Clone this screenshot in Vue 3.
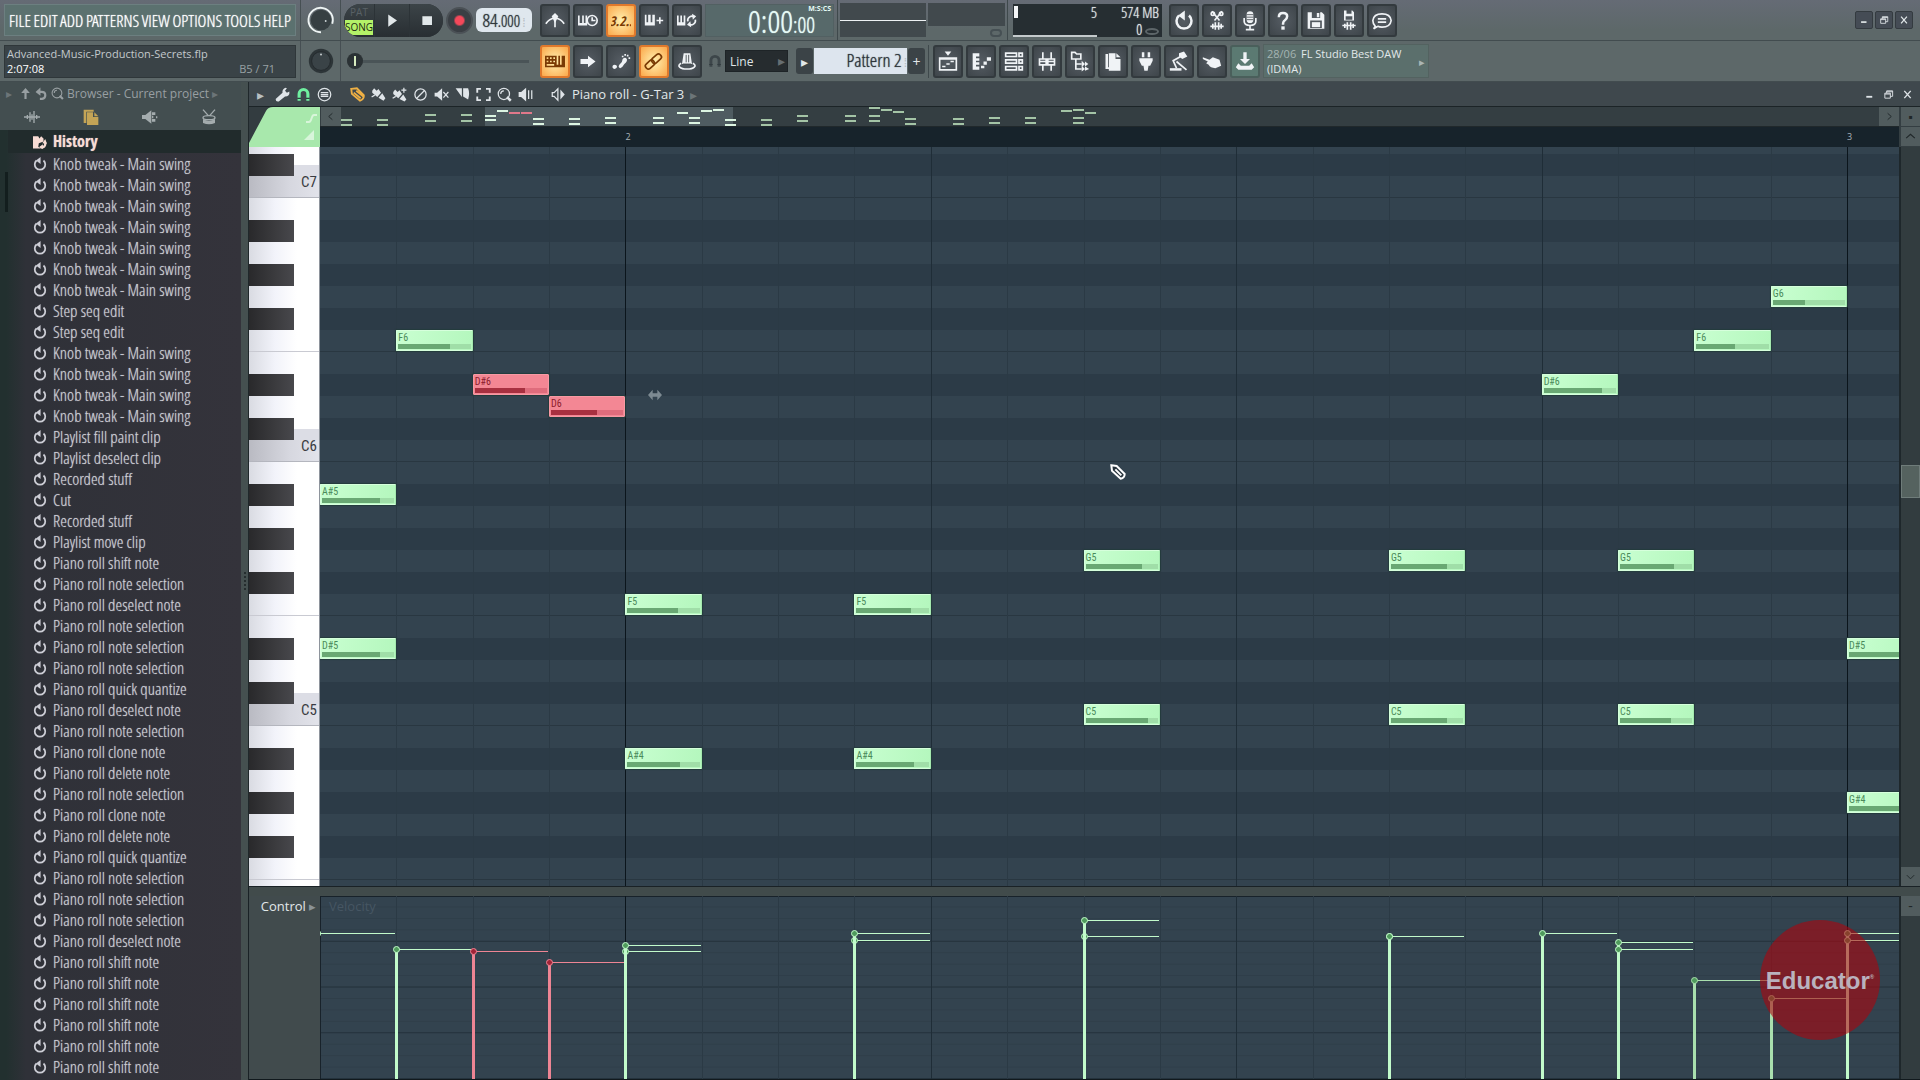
<template>
  <div class="app">
    <header class="toolbar">
      <div class="bar">
        <nav class="menu" aria-label="Main menu">
          <button v-for="m in menus" :key="m" type="button">{{ m }}</button>
        </nav>
        <div class="knob-cell">
          <svg class="knob" viewBox="0 0 32 32" role="img" aria-label="Main volume">
            <circle cx="16" cy="16" r="11" fill="#363f42" />
            <path d="M16 29A13 13 0 1 1 28 20" fill="none" stroke="#eef4f4" stroke-width="2" />
            <circle cx="21" cy="17" r="1" fill="#cfd6d8" />
          </svg>
        </div>
        <div class="transport">
          <div class="pill">
            <button class="mode" type="button">
              <span class="pat">PAT</span>
              <span class="song">SONG</span>
            </button>
            <button type="button" aria-label="Play" v-html="icon('play')"></button>
            <button type="button" aria-label="Stop" v-html="icon('stop')"></button>
          </div>
          <button class="record" type="button" aria-label="Record"></button>
          <button class="tempo" type="button">84<small>.000</small><span class="spin">⁞</span></button>
        </div>
        <div class="buttons">
          <button
            v-for="b in topButtons"
            :key="b.name"
            :class="['tool', { lit: b.lit }]"
            type="button"
            :aria-label="b.name"
            v-html="icon(b.name)"
          ></button>
        </div>
        <div class="clock">
          <span class="clock-main">0:00</span>
          <span class="clock-sub">:00</span>
          <span class="clock-unit">M:S:CS</span>
        </div>
        <div class="scopes">
          <div class="scope"><i></i></div>
          <div class="peak-cell">
            <div class="peak"></div>
            <span class="peak-dot"></span>
          </div>
        </div>
        <div class="monitor">
          <div class="cpu"><i></i><span>5</span></div>
          <div class="mem"><span>574 MB</span><span>0 <em></em></span></div>
        </div>
        <div class="buttons">
          <button
            v-for="n in fileButtons"
            :key="n"
            class="tool"
            type="button"
            :aria-label="n"
            v-html="icon(n)"
          ></button>
        </div>
        <div class="window-buttons">
          <button type="button" aria-label="Minimize" v-html="icon('min')"></button>
          <button type="button" aria-label="Restore" v-html="icon('restore')"></button>
          <button type="button" aria-label="Close" v-html="icon('close')"></button>
        </div>
      </div>

      <div class="bar">
        <div class="hint">
          <div>Advanced-Music-Production-Secrets.flp</div>
          <div class="hint-row"><b>2:07:08</b><span>B5 / 71</span></div>
        </div>
        <div class="knob-cell">
          <svg class="knob" viewBox="0 0 32 32" role="img" aria-label="Main pitch">
            <circle cx="16" cy="16" r="13" fill="#2d3538" />
            <circle cx="16" cy="16" r="10" fill="#3a4347" stroke="#232a2d" stroke-width="1" />
            <circle cx="16" cy="9" r="1" fill="#cfd6d8" />
          </svg>
        </div>
        <div class="transport">
          <input class="pitch" type="range" min="0" max="100" value="0" aria-label="Song position" />
        </div>
        <div class="buttons">
          <button
            v-for="b in editButtons"
            :key="b.name"
            :class="['tool', { lit: b.lit }]"
            type="button"
            :aria-label="b.name"
            v-html="icon(b.name)"
          ></button>
        </div>
        <div class="snap">
          <span class="snap-icon" v-html="icon('magnet')"></span>
          <span class="select-wrap">
            <select aria-label="Snap">
              <option>Line</option>
            </select>
          </span>
        </div>
        <div class="pattern">
          <button class="side" type="button" aria-label="Pattern menu">▸</button>
          <button class="pattern-name" type="button">Pattern 2<span class="spin">⁞</span></button>
          <button class="side" type="button" aria-label="Add pattern">+</button>
        </div>
        <div class="buttons views">
          <button
            v-for="n in viewButtons"
            :key="n"
            :class="['tool', { flat: n === 'download' }]"
            type="button"
            :aria-label="n"
            v-html="icon(n)"
          ></button>
        </div>
        <button class="news" type="button">
          <span><i>28/06</i> FL Studio Best DAW<br />(IDMA)</span>
          <span class="arrow">▸</span>
        </button>
      </div>
    </header>

    <main class="workspace">
      <aside class="browser">
        <div class="browser-head">
          <div class="browser-title">
            <span class="tri dim">▸</span>
            <span v-html="icon('up')"></span>
            <span v-html="icon('back')"></span>
            <span v-html="icon('zoom')"></span>
            Browser - Current project
            <span class="tri dim">▸</span>
          </div>
          <div class="browser-tabs">
            <button type="button" aria-label="All" v-html="icon('wave')"></button>
            <button class="current" type="button" aria-label="Current project" v-html="icon('docs')"></button>
            <button type="button" aria-label="Plugins" v-html="icon('plug')"></button>
            <button type="button" aria-label="Library" v-html="icon('drum')"></button>
          </div>
        </div>
        <div class="browser-body">
          <div class="browser-track"><i></i></div>
          <div class="browser-list">
            <button class="history" type="button">
              <span v-html="icon('history')"></span>History
            </button>
            <ul>
              <li v-for="(h, i) in history" :key="i">
                <button type="button"><span v-html="icon('undo')"></span>{{ h }}</button>
              </li>
            </ul>
          </div>
        </div>
      </aside>
      <div class="splitter"><i></i></div>

      <section class="roll">
        <div class="roll-title">
          <span class="tri">▸</span>
          <button
            v-for="t in rollTools"
            :key="t"
            :class="t"
            type="button"
            :aria-label="t"
            v-html="icon(t)"
          ></button>
          <span class="speaker" v-html="icon('speaker')"></span>
          <h1>Piano roll - G-Tar 3</h1>
          <span class="tri dim">▸</span>
          <div class="roll-window">
            <button type="button" aria-label="Minimize roll" v-html="icon('min')"></button>
            <button type="button" aria-label="Restore roll" v-html="icon('restore')"></button>
            <button type="button" aria-label="Close roll" v-html="icon('close')"></button>
          </div>
        </div>

        <div class="roll-top">
          <svg class="corner" viewBox="0 0 71 40" preserveAspectRatio="none" aria-hidden="true">
            <path d="M0 40V36L17 4Q19 0 24 0H71V40Z" fill="#a8e8ac" />
            <path d="M57 15h3c3 0 2-7 5-7h3" fill="none" stroke="#d8f5da" stroke-width="2" />
            <path d="M55 33h10V23Z" fill="#d8f5da" />
          </svg>
          <div class="roll-heads">
            <div class="overview">
              <button type="button" aria-label="Scroll left" v-html="icon('left')"></button>
              <svg class="mini" aria-hidden="true">
                <rect x="144" y="0" width="248" height="20" fill="#4f5c61" />
                <rect
                  v-for="(m, i) in miniNotes"
                  :key="i"
                  :x="144 + m[0] * 12"
                  :y="m[1]"
                  width="11"
                  height="2"
                  :fill="m[2] ? '#e0788a' : m[0] >= 0 && m[0] < 21 ? '#dcf5e2' : '#a4c4a6'"
                />
              </svg>
              <button type="button" aria-label="Scroll right" v-html="icon('right')"></button>
            </div>
            <div class="timeline">
              <span v-for="b in bars" :key="b.label" :style="{ left: pct(b.step) }">{{ b.label }}</span>
            </div>
          </div>
          <div class="scroll-head">
            <button type="button" aria-label="View menu">▪</button>
            <button type="button" aria-label="Scroll up" v-html="icon('chevup')"></button>
          </div>
        </div>

        <div class="roll-body">
          <div class="keys">
            <div class="rows">
              <div v-for="k in keys" :key="k.pitch" :class="['key', k.kind]">
                <span v-if="k.kind === 'c'">C{{ k.octave }}</span>
              </div>
            </div>
          </div>
          <div class="grid">
            <div class="rows">
              <div v-for="k in keys" :key="k.pitch" :class="['lane', k.kind]"></div>
            </div>
            <i v-for="l in lines" :key="l.step" :class="['line', l.kind]" :style="{ left: pct(l.step) }"></i>
            <div
              v-for="(n, i) in notes"
              :key="i"
              :class="['note', { selected: n.selected }]"
              :style="{ left: pct(n.step), top: noteTop(n) + 'px', width: pct(1) }"
            >
              <span>{{ n.name }}</span>
              <b><i :style="{ width: n.vel * 100 + '%' }"></i></b>
            </div>
            <span class="resize-cursor" v-html="icon('resize')"></span>
            <span class="pen-cursor" v-html="icon('pen')"></span>
          </div>
          <div class="vscroll">
            <i></i>
            <button type="button" aria-label="Scroll down" v-html="icon('chevdown')"></button>
          </div>
        </div>

        <div class="control">
          <button class="control-label" type="button">Control <span>▸</span></button>
          <div class="velocity">
            <span class="velocity-name">Velocity</span>
            <i v-for="l in lines" :key="l.step" :class="['line', l.kind]" :style="{ left: pct(l.step) }"></i>
            <div
              v-for="(n, i) in notes"
              :key="i"
              :class="['stem', { selected: n.selected, soft: n.vel < 0.6, first: n.step === 0 }]"
              :style="{ left: pct(n.step), height: n.vel * 100 + '%', width: pct(1) }"
            ></div>
          </div>
          <div class="vscroll">
            <button type="button" aria-label="Control menu">-</button>
          </div>
          <div class="badge">Educator<sup>®</sup></div>
        </div>
      </section>
    </main>
  </div>
</template>

<script setup>
const STEPS = 20.68
const TOP_PITCH = 86
const ROW = 22

const menus = ['FILE', 'EDIT', 'ADD', 'PATTERNS', 'VIEW', 'OPTIONS', 'TOOLS', 'HELP']

const topButtons = [
  { name: 'metronome' },
  { name: 'waitkeys' },
  { name: 'countdown', lit: true },
  { name: 'overdub' },
  { name: 'looprec' }
]
const editButtons = [
  { name: 'typing', lit: true },
  { name: 'arrow' },
  { name: 'step' },
  { name: 'link', lit: true },
  { name: 'hat' }
]
const fileButtons = ['undo', 'cut', 'mic', 'help', 'save', 'render', 'chat']
const viewButtons = ['playlist', 'pianoroll', 'rack', 'mixer', 'tree', 'copy', 'plugin', 'lamp', 'touch', 'download']
const rollTools = [
  'wrench', 'magnet', 'stamp', 'pencil', 'brush', 'brushplus', 'erase', 'mute', 'slice', 'select', 'zoom', 'playback'
]

const shift = 'Piano roll shift note'
const selection = 'Piano roll note selection'
const deselect = 'Piano roll deselect note'
const clone = 'Piano roll clone note'
const del = 'Piano roll delete note'
const quantize = 'Piano roll quick quantize'
const history = [
  ...Array(7).fill('Knob tweak - Main swing'),
  'Step seq edit',
  'Step seq edit',
  ...Array(4).fill('Knob tweak - Main swing'),
  'Playlist fill paint clip',
  'Playlist deselect clip',
  'Recorded stuff',
  'Cut',
  'Recorded stuff',
  'Playlist move clip',
  shift, selection, deselect, selection, selection, selection, quantize, deselect,
  selection, clone, del, selection, clone, del, quantize,
  selection, selection, selection, deselect,
  ...Array(6).fill(shift)
]

const names = ['C', 'C#', 'D', 'D#', 'E', 'F', 'F#', 'G', 'G#', 'A', 'A#', 'B']

const keys = Array.from({ length: 35 }, (_, i) => {
  const pitch = TOP_PITCH - i
  const name = names[pitch % 12]
  let kind = 'white'
  if (name.length > 1) kind = name === 'C#' ? 'black above-c' : 'black'
  if (name === 'C') kind = 'c'
  if (name === 'F') kind = 'f'
  return { pitch, kind, octave: Math.floor(pitch / 12) }
})

const bars = [
  { label: '2', step: 4 },
  { label: '3', step: 20 }
]

const lines = Array.from({ length: 20 }, (_, i) => {
  const step = i + 1
  let kind = ''
  if (step % 4 === 0) kind = 'beat'
  if (step === 4 || step === 20) kind = 'bar-line'
  return { step, kind }
})

const notes = [
  { step: 0, name: 'A#5', vel: 0.8 },
  { step: 0, name: 'D#5', vel: 0.8 },
  { step: 1, name: 'F6', vel: 0.71 },
  { step: 2, name: 'D#6', vel: 0.7, selected: true },
  { step: 3, name: 'D6', vel: 0.64, selected: true },
  { step: 4, name: 'F5', vel: 0.7 },
  { step: 4, name: 'A#4', vel: 0.73 },
  { step: 7, name: 'F5', vel: 0.76 },
  { step: 7, name: 'A#4', vel: 0.8 },
  { step: 10, name: 'G5', vel: 0.78 },
  { step: 10, name: 'C5', vel: 0.87 },
  { step: 14, name: 'G5', vel: 0.78 },
  { step: 14, name: 'C5', vel: 0.78 },
  { step: 16, name: 'D#6', vel: 0.8 },
  { step: 17, name: 'G5', vel: 0.75 },
  { step: 17, name: 'C5', vel: 0.71 },
  { step: 18, name: 'F6', vel: 0.54 },
  { step: 19, name: 'G6', vel: 0.44 },
  { step: 20, name: 'D#5', vel: 0.8 },
  { step: 20, name: 'G#4', vel: 0.76 }
]

// [step, y, selected]
const miniNotes = [
  [-12, 12], [-12, 17], [-9, 12], [-9, 17], [-5, 7], [-5, 13], [-2, 7], [-2, 13],
  [0, 8], [0, 12], [1, 3], [2, 5, true], [3, 5, true],
  [4, 11], [4, 16], [7, 11], [7, 16], [10, 10], [10, 15], [14, 10], [14, 15],
  [16, 5], [17, 10], [17, 15], [18, 3], [19, 2], [20, 12], [20, 17],
  [23, 12], [23, 17], [26, 8], [26, 13], [30, 8], [30, 13],
  [32, 0], [32, 8], [32, 13], [33, 2], [34, 4], [35, 11], [35, 16],
  [39, 11], [39, 16], [42, 10], [42, 15], [45, 10], [45, 15],
  [48, 3], [49, 2], [49, 10], [49, 15], [50, 5]
]

function pct(step) {
  return (step / STEPS) * 100 + '%'
}

function noteTop(note) {
  const octave = Number(note.name.slice(-1))
  const pitch = octave * 12 + names.indexOf(note.name.slice(0, -1))
  return (TOP_PITCH - pitch) * ROW - 15
}

const s = 'fill="none" stroke="currentColor" stroke-width="2"'
const f = 'fill="currentColor"'

const icons = {
  play: `<path ${f} d="M8 5l10 7-10 7z"/>`,
  stop: `<path ${f} d="M7 7h11v10H7z"/>`,
  min: `<path ${f} d="M5 15h13v4H5z"/>`,
  restore: `<path ${s} d="M4 9h12v11H4zM4 11h12M8 9V4h13v12h-5M8 6h13"/>`,
  close: `<path fill="none" stroke="currentColor" stroke-width="3" d="M5 4l14 16M19 4L5 20"/>`,
  metronome: `<path ${s} d="M1 16q4-6 10-7M23 16q-4-6-10-7M12 6v14"/><path ${f} d="M8 7l4-4 4 4-4 8z"/>`,
  waitkeys: `<path ${f} d="M0 6h2v9h3V6h2v9h2V6h2v12H0z"/><circle ${s} cx="17" cy="12" r="6"/><path ${s} d="M17 8v4h4"/>`,
  countdown: `<text x="12" y="18" text-anchor="middle" font-size="16" font-style="italic" font-family="Open Sans Condensed, sans-serif" font-weight="700" fill="currentColor">3.2.:</text>`,
  overdub: `<path ${f} d="M1 5h2v9h2V5h3v9h2V5h3v13H1z"/><path ${s} d="M15 12h8M19 8v8"/>`,
  looprec: `<path ${f} d="M0 6h2v8h2V6h2v8h2V6h2v12H0z"/><path ${s} d="M13 13a5 5 0 0 1 8-5M22 11a5 5 0 0 1-8 5"/><path ${f} d="M18 4l5 3-4 4zM17 20l-5-3 4-4z"/>`,
  typing: `<path ${f} fill-rule="evenodd" d="M0 5h24v14H0zM2 7v2h2V7zm4 0v2h2V7zm4 0v2h2V7zM2 11v2h2v-2zm4 0v2h2v-2zm4 0v2h2v-2zM2 15v2h9v-2zM14 5v11h2V5zm4 0v11h2V5z"/>`,
  arrow: `<path ${f} d="M3 9h9V5l9 7-9 7v-4H3z"/>`,
  step: `<path ${f} d="M2 17q2-2 5 0 1 3-3 4-3-1-2-4zM11 20q-3-1-1-4 4-3 4-7 3-3 5 0 1 3-3 6-2 4-5 5zM13 5h2v2h-2zM16 3h2v2h-2zM19 4h2v2h-2zM21 7h2v2h-2z"/>`,
  link: `<g ${s} transform="rotate(-42 12 12)"><rect x="0" y="8" width="12" height="7" rx="3"/><rect x="10" y="8" width="13" height="7" rx="3"/></g>`,
  hat: `<path ${f} d="M8 2h8l2 13H6z"/><path ${s} d="M5 14c-6 3-1 7 7 7s13-4 7-7"/><path stroke="#3a4145" d="M11 4v9M14 4v9M7 15h10"/>`,
  undo: `<path fill="none" stroke="currentColor" stroke-width="3" d="M6 6a9 9 0 1 0 12 0"/><path ${f} d="M13 0v12L5 6z"/>`,
  cut: `<path ${s} d="M6 1l9 11M18 1L9 12"/><circle ${s} cx="7" cy="4" r="2"/><circle ${s} cx="17" cy="4" r="2"/><path ${s} d="M4 19h16M7 16v6M10 14v9M14 14v9M17 16v6"/>`,
  mic: `<rect ${f} x="8" y="1" width="8" height="14" rx="4"/><path ${s} d="M5 9v4q0 5 7 5t7-5V9M12 18v4M7 23h10"/><path stroke="#444b50" d="M8 5h8M8 8h8M8 11h8"/>`,
  help: `<path fill="none" stroke="currentColor" stroke-width="3" d="M7 8q0-5 5-5t5 4q0 3-3 5-2 1-2 5"/><path ${f} d="M10 19h4v4h-4z"/>`,
  save: `<path ${f} fill-rule="evenodd" d="M2 2h17l3 3v17H2zM7 2v7h10V2zm6 1h3v5h-3zM5 12v9h14v-9z"/><path ${f} d="M7 14h10v6H7z"/>`,
  render: `<path ${f} fill-rule="evenodd" d="M6 0h10l2 2v10H6zM9 0v4h6V0zM8 7v4h8V7z"/><path ${s} d="M4 18h16M7 16v5M10 14v9M14 14v9M17 16v5"/>`,
  chat: `<path ${s} d="M4 19q-3-3-3-7 1-8 11-8t11 8q-1 8-11 8-3 0-5-1l-5 3zM7 10h10M7 14h10"/>`,
  playlist: `<path ${s} d="M2 8h20v14H2zM2 9h20"/><path ${s} d="M5 18h4M10 15h4M15 12h4"/><path ${f} d="M8 0h8l-4 5z"/>`,
  pianoroll: `<path ${f} d="M2 2h8v4H6v2h4v3H6v2h4v3H6v2h4v4H2zM12 17h4v3h-4zM15 12h4v4h-4zM19 7h5v4h-5z"/>`,
  rack: `<path ${s} d="M2 2h13v4H2zM18 2h4v4h-4zM2 10h13v4H2zM18 10h4v4h-4zM2 18h13v4H2zM18 18h4v4h-4z"/>`,
  mixer: `<path ${s} d="M7 1v8M7 16v7M17 1v8M17 16v7M3 9h8v7H3zM13 9h8v7h-8zM3 12h8M13 12h8"/>`,
  tree: `<path ${s} d="M2 1h4l2 2h5v6H2zM7 10v11h7M7 15h7"/><path ${f} d="M14 11l4 4-4 4zM18 12l4 3-4 3zM14 17l4 4-4 3zM18 18l5 3-5 2z"/>`,
  copy: `<path ${f} d="M3 3h3v16h11v2H3z"/><path ${f} d="M7 2h8v7h6v14H7zM16 2l5 5h-5z"/>`,
  plugin: `<path ${f} d="M7 1h3v6H7zM14 1h3v6h-3zM4 8h16v3l-3 6h-2l-1 6h-4l-1-6H7l-3-6z"/>`,
  lamp: `<path ${f} d="M12 2l6-2 4 6-6 3-4-3z"/><path ${s} d="M14 6L5 11l4 9M9 12l12 10"/><path ${f} d="M1 20h14v3H1z"/>`,
  touch: `<path ${f} d="M1 7l8 3 4-3 8 3 2 7-7 3q-6 0-8-4l-3-2 2-2-6-3z"/>`,
  download: `<path ${f} d="M10 1h4v8h4l-6 6-6-6h4zM4 14l3 3h10l3-3 3 5-3 3H4l-3-3z"/>`,
  magnet: `<path fill="none" stroke="currentColor" stroke-width="5" d="M5 22V11a7 7 0 0 1 14 0v11"/><path stroke="#333c40" stroke-width="2" d="M2 18h6M16 18h6"/>`,
  up: `<path ${f} d="M12 2l8 9h-6v11h-4V11H4z"/>`,
  back: `<path fill="none" stroke="currentColor" stroke-width="4" d="M9 22h4q6-1 6-7t-7-6H6"/><path ${f} d="M10 1v15L1 9z"/>`,
  zoom: `<circle ${s} cx="11" cy="11" r="9"/><path fill="none" stroke="currentColor" stroke-width="4" d="M16 16l6 6"/><path ${s} d="M6 11q0-5 5-5"/>`,
  wave: `<path ${s} d="M0 12h24M5 9v6M9 5v14M12 8v8M15 3v18M19 9v6"/>`,
  docs: `<path ${f} d="M1 1h15v3H5v17H1z"/><path ${f} d="M6 5h9v7h8v12H6zM17 5l6 6h-6z"/>`,
  plug: `<path ${f} d="M0 9h5l9-7v20l-9-7H0zM15 5h5v4h-5zM15 15h5v4h-5zM15 10h2v4h-2zM21 11h2v3h-2z"/>`,
  drum: `<path ${s} d="M3 1l8 9M21 1l-8 9"/><ellipse ${s} cx="12" cy="13" rx="9" ry="3"/><path ${f} d="M3 15q9 5 18 0v6q-9 4-18 0z"/>`,
  history: `<path ${f} d="M0 2h9l2 4 3-4 4 4v5l-8 3-1 6 4 3H0z"/><path fill="none" stroke="currentColor" stroke-width="4" d="M13 21q9 1 8-8"/><path ${f} d="M16 14l5-7 3 8zM17 16v8l-7-3z"/>`,
  wrench: `<path ${f} d="M1 19L12 9q-1-6 5-8l2 1-3 4 3 3 4-2q1 8-7 8L6 23q-5 1-5-4z"/>`,
  stamp: `<circle ${s} cx="12" cy="12" r="10"/><path ${s} d="M6 9h12M6 12h12M6 15h12"/>`,
  pencil: `<path fill="none" stroke="currentColor" stroke-width="3" d="M2 3l9-1 11 11q1 6-6 9L3 11zM6 9l11 9M10 6l11 9"/>`,
  brush: `<path ${f} d="M2 6l3-4 4 4 3-3 4 6-6 7-8-7zM12 17l6-7 5 8-3 4z"/><path ${s} d="M1 16l5-3"/>`,
  brushplus: `<path ${f} d="M2 8l3-4 4 4 3-3 4 6-6 7-8-7zM12 19l6-7 5 8-3 3z"/><path ${s} d="M19 1v8M15 5h8M1 18l5-3"/>`,
  erase: `<circle ${s} cx="12" cy="12" r="9"/><path ${s} d="M6 18L18 6"/>`,
  mute: `<path ${f} d="M1 9h4l8-7v20l-8-7H1z"/><path ${s} d="M15 8l8 9M23 8l-8 9"/>`,
  slice: `<path ${f} d="M1 2h10v14zM13 2h8q3 8 0 18l-8-5z"/>`,
  select: `<path fill="none" stroke="currentColor" stroke-width="3" d="M2 9V3h6M16 3h6v6M22 15v6h-6M8 21H2v-6"/>`,
  playback: `<path ${f} d="M1 8h4l8-7v22l-8-7H1z"/><path ${s} d="M17 5v14M22 5v14"/>`,
  speaker: `<path ${s} d="M2 9h3l6-6v18l-6-6H2z"/><path ${f} d="M15 4l7 8-7 8z"/>`,
  left: `<path ${s} d="M15 5l-8 7 8 7"/>`,
  right: `<path ${s} d="M9 5l8 7-8 7"/>`,
  chevup: `<path ${s} d="M4 15l8-7 8 7"/>`,
  chevdown: `<path ${s} d="M4 8l8 8 8-8"/>`,
  resize: `<path ${f} d="M0 12l8-9v6h8V3l8 9-8 9v-6H8v6z"/>`,
  pen: `<path fill="#26323b" stroke="#fff" stroke-width="3" d="M2 2l8 1 12 12q0 6-6 7L3 10zM8 8l9 9"/>`
}

function icon(name) {
  return `<svg viewBox="0 0 24 24" width="100%" height="100%" style="display:block">${icons[name]}</svg>`
}
</script>

<style>
body {
  background: #333c40;
}
</style>

<style scoped>
.app {
  color: #e2e8ea;
  display: flex;
  flex-direction: column;
  font-family: 'Open Sans', 'Noto Sans', sans-serif;
  font-size: 14px;
  height: 100vh;
  overflow: hidden;
}

button,
select {
  background: none;
  border: 0;
  color: inherit;
  font: inherit;
  margin: 0;
  padding: 0;
}

ul {
  list-style: none;
  margin: 0;
  padding: 0;
}

/* toolbar */
.toolbar {
  background: linear-gradient(#656b75, #5d6869 30px);
}

.bar {
  align-items: center;
  border-bottom: 1px solid #424c4f;
  box-sizing: border-box;
  display: flex;
  height: 41px;
}

.menu {
  background: #5b716f;
  border: 1px solid #6c7f80;
  box-sizing: border-box;
  display: flex;
  flex: 0 0 292px;
  font-family: 'Open Sans Condensed Light', 'Open Sans', sans-serif;
  font-size: 17px;
  height: 32px;
  justify-content: space-between;
  margin-left: 4px;
  padding: 0 4px;
}

.menu button {
  color: #fff;
  text-shadow: 0 0 1px #fff;
}

.knob-cell {
  align-items: center;
  border-left: 1px solid #464f53;
  border-right: 1px solid #464f53;
  box-sizing: border-box;
  display: flex;
  flex: 0 0 41px;
  height: 100%;
  justify-content: center;
  margin-left: 4px;
}

.knob {
  height: 30px;
  width: 30px;
}

.transport {
  align-items: center;
  display: flex;
  flex: 0 0 196px;
  gap: 3px;
  margin-right: 3px;
}

.pill {
  background: #2c3337;
  border-radius: 17px;
  display: flex;
  gap: 1px;
  height: 33px;
  margin-left: 3px;
  overflow: hidden;
  width: 99px;
}

.pill button {
  align-items: center;
  background: linear-gradient(#3c4448, #282e32);
  display: flex;
  flex: 1;
  justify-content: center;
  padding: 6px;
}

.pill .mode {
  align-items: stretch;
  flex-direction: column;
  font-size: 10px;
  line-height: 15px;
  padding: 0;
}

.pat {
  color: #596166;
}

.song {
  background: #b4f268;
  color: #1d2b12;
  margin: 0 1px;
}

.record {
  background: radial-gradient(circle, #f5485a 4px, #3a3f44 6px, #3a3f44);
  border: 2px solid #4b5156;
  border-radius: 50%;
  height: 27px;
  width: 27px;
}

.tempo {
  background: #dfe7ee;
  border-radius: 6px;
  color: #30373c;
  font-family: 'Open Sans Condensed Light', sans-serif;
  font-size: 19px;
  height: 24px;
  line-height: 24px;
  text-shadow: 0 0 1px #30373c;
  width: 56px;
}

.tempo small {
  font-size: 16px;
}

.spin {
  color: #b4bcc2;
  font-size: 12px;
  padding-left: 2px;
  text-shadow: none;
}

.buttons {
  display: flex;
  gap: 3px;
}

.tool {
  background: radial-gradient(#555c63, #3e454a);
  border: 2px solid #333a3e;
  border-radius: 3px;
  box-sizing: border-box;
  color: #f0f3f6;
  height: 33px;
  padding: 4px 3px;
  width: 30px;
}

.tool.lit {
  background: radial-gradient(#fff0b0, #fba84a);
  border-color: #e0792c;
  color: #7a3a04;
}

.tool.flat {
  background: #5b7a72;
  border-color: #4a5f5b;
}

.clock {
  background: #57696a;
  border: 1px solid #526062;
  box-sizing: border-box;
  color: #e6fbf6;
  display: grid;
  flex: 0 0 129px;
  font-family: 'Open Sans Condensed Light', sans-serif;
  grid-template-columns: 1fr 38px;
  grid-template-rows: 8px 23px;
  height: 33px;
  margin-left: 3px;
  padding-right: 2px;
  text-shadow: 0 0 1px #e6fbf6;
}

.clock-main {
  font-size: 32px;
  grid-row: 1 / 3;
  line-height: 31px;
  text-align: right;
}

.clock-sub {
  font-size: 22px;
  grid-column: 2;
  grid-row: 2;
  line-height: 22px;
  overflow: visible;
}

.clock-unit {
  font-family: 'Open Sans', sans-serif;
  font-size: 7px;
  font-weight: 700;
  grid-column: 2;
  grid-row: 1;
  line-height: 8px;
  text-align: right;
  text-shadow: none;
}

.scopes {
  border-left: 1px solid #3f494c;
  border-right: 1px solid #3f494c;
  box-sizing: border-box;
  display: flex;
  gap: 2px;
  height: 100%;
  margin: 0 5px 0 3px;
  padding: 3px 2px;
}

.scope {
  align-items: center;
  background: #41494d;
  display: flex;
  width: 86px;
}

.scope i {
  background: #eef2f4;
  height: 1px;
  width: 100%;
}

.peak {
  background: #41494d;
  height: 23px;
  width: 77px;
}

.peak-dot {
  border: 2px solid #465054;
  border-radius: 6px;
  display: block;
  height: 4px;
  margin: 3px 3px 0 auto;
  width: 8px;
}

.monitor {
  background: #262e32;
  display: flex;
  flex: 0 0 149px;
  font-family: 'Open Sans Condensed Light', sans-serif;
  font-size: 15px;
  height: 33px;
  line-height: 17px;
  margin-right: 7px;
  text-shadow: 0 0 1px #e2e8ea;
}

.cpu {
  border-bottom: 2px solid #c4cacc;
  box-sizing: border-box;
  display: flex;
  justify-content: space-between;
  width: 84px;
}

.cpu i {
  background: #f4f6f8;
  height: 12px;
  margin: 2px 0 0 1px;
  width: 4px;
}

.mem {
  display: flex;
  flex: 1;
  flex-direction: column;
  padding-right: 3px;
  text-align: right;
}

.mem em {
  border: 2px solid #5d6669;
  border-radius: 50%;
  display: inline-block;
  height: 3px;
  width: 10px;
}

.window-buttons {
  display: flex;
  gap: 2px;
  margin: 0 7px 0 auto;
}

.window-buttons button {
  background: #454c55;
  border: 1px solid #343b40;
  border-radius: 2px;
  height: 18px;
  padding: 3px;
  width: 18px;
}

.hint {
  background: #3a4347;
  border: 1px solid #2f373a;
  box-sizing: border-box;
  color: #c3c9cc;
  flex: 0 0 292px;
  font-size: 11px;
  height: 33px;
  line-height: 15px;
  margin-left: 4px;
  padding: 0 2px;
}

.hint-row {
  display: flex;
  justify-content: space-between;
  padding-right: 18px;
}

.hint-row b {
  color: #fff;
  font-weight: 400;
}

.hint-row span {
  color: #98a1a4;
}

.pitch {
  appearance: none;
  background: linear-gradient(#4a5457, #4a5457) center / 100% 3px no-repeat;
  flex: 1;
  height: 18px;
  margin: 0 8px 0 6px;
}

.pitch::-webkit-slider-thumb {
  appearance: none;
  background: linear-gradient(90deg, #2b3235 7px, #d8ecc0 7px, #d8ecc0 9px, #2b3235 9px);
  border-bottom: 3px solid #2b3235;
  border-radius: 50%;
  border-top: 3px solid #2b3235;
  box-sizing: border-box;
  height: 16px;
  width: 16px;
}

.snap {
  align-items: center;
  display: flex;
  gap: 3px;
  margin-left: 6px;
}

.snap-icon {
  color: #3d464a;
  height: 14px;
  width: 14px;
}

.select-wrap {
  position: relative;
}

.select-wrap::after {
  color: #666e72;
  content: '▸';
  font-size: 14px;
  pointer-events: none;
  position: absolute;
  right: 3px;
  top: 1px;
}

.select-wrap select {
  appearance: none;
  background: #262c2f;
  border: 1px solid #1e2427;
  color: #dfe4e6;
  font-size: 12px;
  height: 22px;
  padding-left: 4px;
  width: 63px;
}

.pattern {
  display: flex;
  gap: 1px;
  height: 26px;
  margin: 0 3px 0 8px;
}

.side {
  background: #3b4347;
  border-radius: 3px;
  width: 17px;
}

.pattern-name {
  background: #dde5ee;
  color: #2e353b;
  font-family: 'Open Sans Condensed Light', sans-serif;
  font-size: 19px;
  line-height: 24px;
  text-align: right;
  text-shadow: 0 0 1px #2e353b;
  width: 93px;
}

.views {
  border-left: 1px solid #3f494c;
  padding-left: 4px;
}

.news {
  align-items: center;
  background: #5b6f6c;
  border: 1px solid #536260;
  box-sizing: border-box;
  display: flex;
  flex: 0 0 166px;
  font-size: 11px;
  height: 34px;
  justify-content: space-between;
  line-height: 15px;
  margin-left: 3px;
  padding: 0 3px;
  text-align: left;
}

.news i {
  color: #a5b5b3;
  font-style: normal;
  margin-right: 2px;
}

.arrow {
  color: #aab6b4;
}

/* browser */
.workspace {
  display: flex;
  flex: 1;
  min-height: 0;
}

.browser {
  display: flex;
  flex: 0 0 241px;
  flex-direction: column;
}

.browser-head {
  background: #434e50;
  color: #989fa2;
  height: 48px;
}

.browser-title {
  align-items: center;
  display: flex;
  font-size: 12px;
  gap: 3px;
  height: 23px;
  padding-left: 6px;
}

.browser-title span:not(.tri) {
  height: 13px;
  width: 13px;
}

.tri {
  color: #b8bfc2;
  width: 10px;
}

.tri.dim {
  color: #6c7578;
}

.browser-tabs {
  display: flex;
  justify-content: space-between;
  padding: 4px 24px 0;
}

.browser-tabs button {
  color: #a4acae;
  height: 16px;
  width: 16px;
}

.browser-tabs .current {
  color: #c4a456;
}

.browser-body {
  background: linear-gradient(90deg, #22302f 6px, #2f3138 26px, #34333b);
  display: flex;
  flex: 1;
  min-height: 0;
  overflow: hidden;
}

.browser-track {
  flex: 0 0 8px;
  padding-top: 42px;
}

.browser-track i {
  background: #131e1e;
  display: block;
  height: 40px;
  margin-left: 5px;
  width: 3px;
}

.browser-list {
  flex: 1;
  font-family: 'Open Sans Condensed Light', sans-serif;
  font-size: 17px;
}

.browser-list button {
  align-items: center;
  color: #cdced6;
  display: flex;
  gap: 6px;
  height: 21px;
  line-height: 21px;
  padding-left: 25px;
  text-shadow: 0 0 1px #a8a9b0;
  width: 100%;
}

.browser-list button span {
  height: 14px;
  width: 14px;
}

.browser-list .history {
  background: #212b2c;
  color: #f8dcd4;
  font-family: 'Open Sans Condensed', sans-serif;
  font-size: 16px;
  height: 23px;
}

.splitter {
  align-items: center;
  background: #455050;
  border-right: 1px solid #20282b;
  box-sizing: border-box;
  display: flex;
  flex: 0 0 8px;
  justify-content: center;
}

.splitter i {
  border-left: 2px dotted #252d2e;
  height: 18px;
}

/* piano roll */
.roll {
  display: flex;
  flex: 1;
  flex-direction: column;
  min-width: 0;
}

.roll-title {
  align-items: center;
  background: #3f484d;
  display: flex;
  gap: 6px;
  height: 24px;
  padding-left: 8px;
}

.roll-title button,
.speaker {
  color: #dfe4e8;
  height: 15px;
  width: 15px;
}

.roll-title .tri {
  margin-right: 2px;
}

.roll-title .magnet {
  color: #6ff0a0;
}

.roll-title .pencil {
  color: #efb044;
}

.roll-title .stamp {
  margin-right: 12px;
}

.roll-title .speaker {
  margin-left: 12px;
}

.roll-title h1 {
  font-size: 13px;
  font-weight: 400;
  margin: 0;
}

.roll-window {
  display: flex;
  gap: 8px;
  margin-left: auto;
  padding-right: 7px;
}

.roll-window button {
  height: 11px;
  width: 11px;
}

.roll-top {
  border-top: 1px solid #1c2427;
  display: flex;
  height: 40px;
}

.corner {
  flex: 0 0 71px;
  height: 40px;
}

.roll-heads {
  flex: 1;
  min-width: 0;
}

.overview {
  background: #343e42;
  border-bottom: 1px solid #20282b;
  box-sizing: border-box;
  display: flex;
  height: 20px;
  padding-left: 1px;
}

.overview button,
.scroll-head button,
.vscroll button {
  background: #515c5e;
  color: #1f2628;
  flex: 0 0 20px;
  padding: 4px;
}

.mini {
  flex: 1;
  height: 19px;
  min-width: 0;
}

.timeline {
  background: #17232b;
  height: 20px;
  position: relative;
}

.timeline span {
  color: #aab4ba;
  font-size: 9px;
  line-height: 20px;
  position: absolute;
}

.scroll-head {
  background: #343e42;
  display: grid;
  flex: 0 0 21px;
  grid-template-rows: 20px 20px;
}

.scroll-head button {
  font-size: 12px;
  line-height: 12px;
  margin: 0 0 1px 2px;
  padding: 3px;
}

.roll-body {
  display: flex;
  flex: 1;
  min-height: 0;
}

.rows {
  margin-top: -15px;
}

.keys {
  background: #fff;
  border-right: 1px solid #8e949c;
  box-sizing: border-box;
  flex: 0 0 71px;
  overflow: hidden;
}

.key {
  box-sizing: border-box;
  height: 22px;
}

.key.white,
.key.f,
.key.c {
  background: linear-gradient(90deg, #d9dbe2, #f2f3fa 26px, #fff 48px);
}

.key.black {
  background: linear-gradient(90deg, #29292b, #48484c 45px, #fff 45px);
}

.key.above-c {
  background:
    linear-gradient(90deg, #29292b, #48484c 45px, transparent 45px),
    linear-gradient(#fff 11px, #dcdde5 11px);
}

.key.f {
  border-bottom: 1px solid #c9cad2;
}

.key.c {
  background: linear-gradient(90deg, #b9bac2, #d6d7df 40px, #e2e3ea);
  border-bottom: 1px solid #b4b6be;
  color: #3a3c42;
  font-family: 'Roboto Condensed', sans-serif;
  font-size: 15px;
  line-height: 12px;
  padding-right: 2px;
  text-align: right;
}

.grid {
  background: #33434f;
  box-shadow: inset 0 1px #131c22;
  flex: 1;
  min-width: 0;
  overflow: hidden;
  position: relative;
}

.lane {
  background: #33434f;
  box-sizing: border-box;
  height: 22px;
}

.lane.black {
  background: #2c3b47;
}

.lane.c,
.lane.f {
  border-bottom: 1px solid #293741;
}

.line {
  background: #2b3a45;
  bottom: 0;
  position: absolute;
  top: 0;
  width: 1px;
}

.line.beat {
  background: #1f2d37;
}

.line.bar-line {
  background: #0b151c;
}

.note {
  background: linear-gradient(100deg, #c9ffd1, #b4f7bd);
  border: 1px solid #d6ffdc;
  border-right-color: #a4e8ae;
  border-radius: 1px;
  box-shadow: 0 0 1px 1px #243c3c;
  box-sizing: border-box;
  color: #4a8a5a;
  font-family: 'Roboto Condensed', 'Liberation Sans', sans-serif;
  font-size: 10px;
  height: 21px;
  line-height: 13px;
  padding: 0 1px;
  position: absolute;
}

.note span {
  display: block;
}

.note b {
  background: #a0dea8;
  display: block;
  height: 5px;
}

.note b i {
  background: #69a873;
  display: block;
  height: 5px;
}

.note.selected {
  background: #f38794;
  border-color: #f799a4;
  color: #8c1c2c;
}

.note.selected b {
  background: #df6c7c;
}

.note.selected b i {
  background: #a83040;
}

.resize-cursor {
  color: #7d8a92;
  height: 14px;
  left: 20.8%;
  position: absolute;
  top: 241px;
  width: 14px;
}

.pen-cursor {
  height: 16px;
  left: 50%;
  position: absolute;
  top: 317px;
  width: 16px;
}

.vscroll {
  background: #323c3f;
  border-left: 2px solid #1e272b;
  box-sizing: border-box;
  display: flex;
  flex: 0 0 21px;
  flex-direction: column;
}

.vscroll i {
  background: #55625f;
  border: 1px solid #6f7c7a;
  box-sizing: border-box;
  height: 33px;
  margin-top: 318px;
}

.vscroll i + button {
  margin-top: auto;
}

.control {
  background: #414b4d;
  border-bottom: 1px solid #11191d;
  border-top: 9px solid #414b4b;
  display: flex;
  flex: 0 0 183px;
  outline: 1px solid #1a2226;
  position: relative;
}

.control-label {
  align-self: flex-start;
  box-sizing: border-box;
  flex: 0 0 71px;
  font-size: 13px;
  line-height: 20px;
  padding-left: 8px;
  white-space: nowrap;
}

.control-label span {
  color: #8b9396;
}

.velocity {
  background:
    linear-gradient(transparent calc(100% - 1px), #24323c 0) 0 0 / 100% 25%,
    linear-gradient(transparent calc(100% - 1px), #2f3e49 0) 0 0 / 100% 6.25%,
    #33434f;
  box-shadow: inset 1px 1px #18222a;
  flex: 1;
  min-width: 0;
  overflow: hidden;
  position: relative;
}

.velocity-name {
  color: #465663;
  font-size: 13px;
  left: 9px;
  line-height: 20px;
  position: absolute;
}

.stem {
  --tone: #c2fbcb;
  --dot: #4f9a5c;
  border-left: 3px solid var(--tone);
  border-top: 1px solid var(--tone);
  bottom: 0;
  box-sizing: border-box;
  margin-left: -1px;
  position: absolute;
}

.stem::before {
  background: var(--dot);
  border: 1px solid var(--tone);
  border-radius: 50%;
  content: '';
  height: 5px;
  left: -5px;
  position: absolute;
  top: -4px;
  width: 5px;
}

.stem.selected {
  --tone: #ee8594;
  --dot: #a02438;
}

.stem.soft {
  --tone: #a9dfae;
}

.stem.first {
  border-left: 0;
}

.vscroll button {
  flex: 0 0 20px;
  line-height: 10px;
}

.badge {
  background: rgba(176, 4, 12, 0.58);
  border-radius: 50%;
  bottom: 39px;
  color: #b9b2be;
  font-family: 'Liberation Sans', sans-serif;
  font-size: 24px;
  font-weight: 700;
  height: 120px;
  line-height: 122px;
  position: absolute;
  right: 40px;
  text-align: center;
  width: 120px;
}

.badge sup {
  font-size: 6px;
  line-height: 0;
  vertical-align: 10px;
}
</style>
